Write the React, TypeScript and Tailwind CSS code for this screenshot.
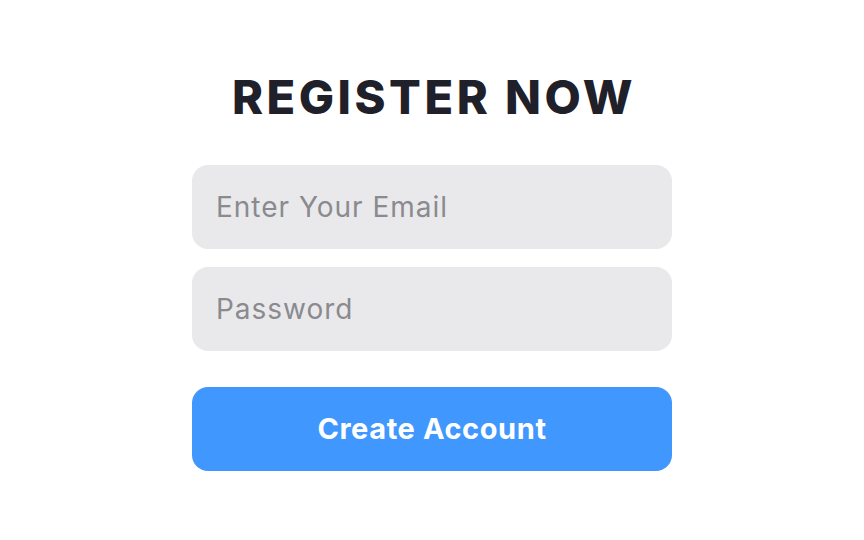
export default function App() {
  return (
    <div className="flex min-h-screen w-full flex-col items-center bg-white" style={{ fontFamily: 'Inter, "Noto Sans", sans-serif' }}>
      <h1 className="mt-[69px] pl-[4px] text-[47px] font-extrabold leading-[56px] tracking-[0.075em] text-[#1f2029]">REGISTER NOW</h1>
      <form className="mt-[40px] flex w-[480px] flex-col" onSubmit={(e) => e.preventDefault()}>
        <input
          type="email"
          placeholder="Enter Your Email"
          className="h-[84px] w-full rounded-2xl bg-[#e9e9eb] px-[24px] text-[28px] tracking-[0.035em] text-[#1f2029] outline-none placeholder:text-[#8a8a8f]"
        />
        <input
          type="password"
          placeholder="Password"
          className="mt-[18px] h-[84px] w-full rounded-2xl bg-[#e9e9eb] px-[24px] text-[28px] tracking-[0.035em] text-[#1f2029] outline-none placeholder:text-[#8a8a8f]"
        />
        <button type="submit" className="mt-[36px] h-[84px] w-full rounded-2xl bg-[#4097fd] text-[29px] font-bold tracking-[0.02em] text-white">
          Create Account
        </button>
      </form>
    </div>
  );
}
